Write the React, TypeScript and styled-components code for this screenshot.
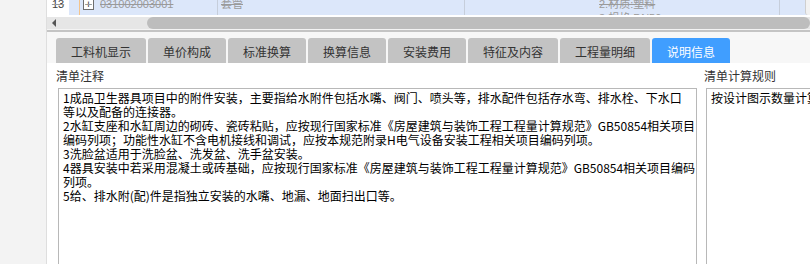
import React from 'react';
import styled, { createGlobalStyle } from 'styled-components';

const Global = createGlobalStyle`
  html, body { margin: 0; padding: 0; width: 810px; height: 264px; overflow: hidden; background: #f3f3f3; }
  body { font-family: "Noto Sans CJK SC", "Noto Sans", sans-serif; }
`;

const Page = styled.div`
  display: flex;
  width: 810px;
  height: 264px;
  overflow: hidden;
`;

const Gutter = styled.div`
  width: 46px;
  flex: none;
  background: #f3f3f3;
  border-right: 1px solid #dedede;
`;

const Main = styled.div`
  flex: 1;
  min-width: 0;
  display: flex;
  flex-direction: column;
  background: #fff;
`;

const GridRow = styled.div`
  display: flex;
  height: 15px;
  flex: none;
  overflow: hidden;
  margin-bottom: 2px;
  font-family: "Liberation Sans", "Noto Sans CJK SC", sans-serif;
  font-size: 11px;
  color: #9a9a9a;
  text-decoration: line-through;
`;

const NumCell = styled.div`
  width: 22px;
  flex: none;
  background: #fff;
  color: #444;
  text-align: center;
  line-height: 14px;
  margin-top: -3px;
`;

const BlueArea = styled.div`
  flex: 1;
  display: flex;
  background: #dce7fa;
`;

const Cell = styled.div<{ $w?: number; $line?: boolean; $pl?: number }>`
  ${(p) => (p.$w ? `width: ${p.$w}px; flex: none;` : 'flex: 1;')}
  border-left: ${(p) => (p.$line ? '1px solid #c6cedb' : 'none')};
  padding-left: ${(p) => p.$pl ?? 0}px;
  display: flex;
  align-items: flex-start;
  overflow: hidden;
`;

const CellText = styled.div`
  margin-top: -3px;
  line-height: 14px;
  white-space: nowrap;
`;

const TreeLine = styled.div`
  width: 1px;
  height: 15px;
  background: #f4c48c;
  margin-right: 3px;
`;

const PlusBox = styled.div`
  width: 9px;
  height: 9px;
  margin-top: -1px;
  margin-right: 6px;
  border: 1px solid #6f6f6f;
  background: #fff;
  color: #333;
  font-size: 11px;
  line-height: 9px;
  text-align: center;
  text-decoration: none;
  display: inline-block;
`;

const VScroll = styled.div`
  width: 4px;
  flex: none;
  background: #f2f2f2;
  border-left: 1px solid #cfcfcf;
  border-bottom-left-radius: 3px;
`;

const HScroll = styled.div`
  height: 12px;
  flex: none;
  display: flex;
  align-items: center;
  background: #e6e6e6;
`;

const ArrowBtn = styled.div`
  width: 100px;
  flex: none;
  height: 12px;
  display: flex;
  align-items: center;
  padding-left: 5px;
  box-sizing: border-box;
  &::before {
    content: '';
    border-right: 4px solid #555;
    border-top: 4px solid transparent;
    border-bottom: 4px solid transparent;
  }
`;

const Thumb = styled.div`
  flex: 1;
  height: 12px;
  border-radius: 6px;
  background: #bdbdbd;
`;

const GridEdge = styled.div`
  height: 2px;
  flex: none;
  border-top: 1px solid #f4f4f4;
  background: #c4c4c4;
`;

const TabBar = styled.div`
  display: flex;
  gap: 2px;
  padding: 6px 0 0 9px;
  background: #f7f7f7;
  flex: none;
`;

const Tab = styled.div<{ $active?: boolean }>`
  height: 25px;
  box-sizing: border-box;
  padding: 2px 15px 0;
  font-size: 12px;
  line-height: 23px;
  white-space: nowrap;
  color: ${(p) => (p.$active ? '#fff' : '#333')};
  background: ${(p) => (p.$active ? '#409eff' : '#c3c3c3')};
  border-radius: 3px 3px 0 0;
`;

const Content = styled.div`
  flex: 1;
  display: grid;
  grid-template-columns: 639px 200px;
  column-gap: 9px;
  padding-left: 11px;
  min-height: 0;
`;

const Column = styled.div`
  display: flex;
  flex-direction: column;
  min-width: 0;
`;

const Label = styled.div`
  height: 25px;
  box-sizing: border-box;
  padding-top: 1px;
  margin-left: -2px;
  font-size: 12px;
  line-height: 24px;
  color: #333;
`;

const Box = styled.div`
  flex: 1;
  border: 1px solid #b8b8b8;
  border-bottom: none;
  padding: 2px 4px;
  font-size: 12px;
  line-height: 14px;
  color: #000;
  white-space: nowrap;
  overflow: hidden;
`;

const Line = styled.div`
  height: 14px;
`;

const tabs = ['工料机显示', '单价构成', '标准换算', '换算信息', '安装费用', '特征及内容', '工程量明细', '说明信息'];

const notes = [
  '1成品卫生器具项目中的附件安装，主要指给水附件包括水嘴、阀门、喷头等，排水配件包括存水弯、排水栓、下水口',
  '等以及配备的连接器。',
  '2水缸支座和水缸周边的砌砖、瓷砖粘贴，应按现行国家标准《房屋建筑与装饰工程工程量计算规范》GB50854相关项目',
  '编码列项；功能性水缸不含电机接线和调试，应按本规范附录H电气设备安装工程相关项目编码列项。',
  '3洗脸盆适用于洗脸盆、洗发盆、洗手盆安装。',
  '4器具安装中若采用混凝土或砖基础，应按现行国家标准《房屋建筑与装饰工程工程量计算规范》GB50854相关项目编码',
  '列项。',
  '5给、排水附(配)件是指独立安装的水嘴、地漏、地面扫出口等。',
];

export default function App() {
  return (
    <>
      <Global />
      <Page>
        <Gutter />
        <Main>
          <GridRow>
            <NumCell>13</NumCell>
            <BlueArea>
              <Cell $w={138} $pl={10}>
                <TreeLine />
                <PlusBox>+</PlusBox>
                <CellText>031002003001</CellText>
              </Cell>
              <Cell $w={243} $line $pl={3}>
                <CellText>套管</CellText>
              </Cell>
              <Cell $w={130} $line />
              <Cell $w={180} $pl={4}>
                <CellText>
                  <div>2.材质:塑料</div>
                  <div>3.规格:DN50</div>
                </CellText>
              </Cell>
              <Cell $line />
              <VScroll />
            </BlueArea>
          </GridRow>
          <HScroll>
            <ArrowBtn />
            <Thumb />
          </HScroll>
          <GridEdge />
          <TabBar>
            {tabs.map((t) => (
              <Tab key={t} $active={t === '说明信息'}>
                {t}
              </Tab>
            ))}
          </TabBar>
          <Content>
            <Column>
              <Label>清单注释</Label>
              <Box>
                {notes.map((n, i) => (
                  <Line key={i}>{n}</Line>
                ))}
              </Box>
            </Column>
            <Column>
              <Label>清单计算规则</Label>
              <Box>
                <Line>按设计图示数量计算</Line>
              </Box>
            </Column>
          </Content>
        </Main>
      </Page>
    </>
  );
}
